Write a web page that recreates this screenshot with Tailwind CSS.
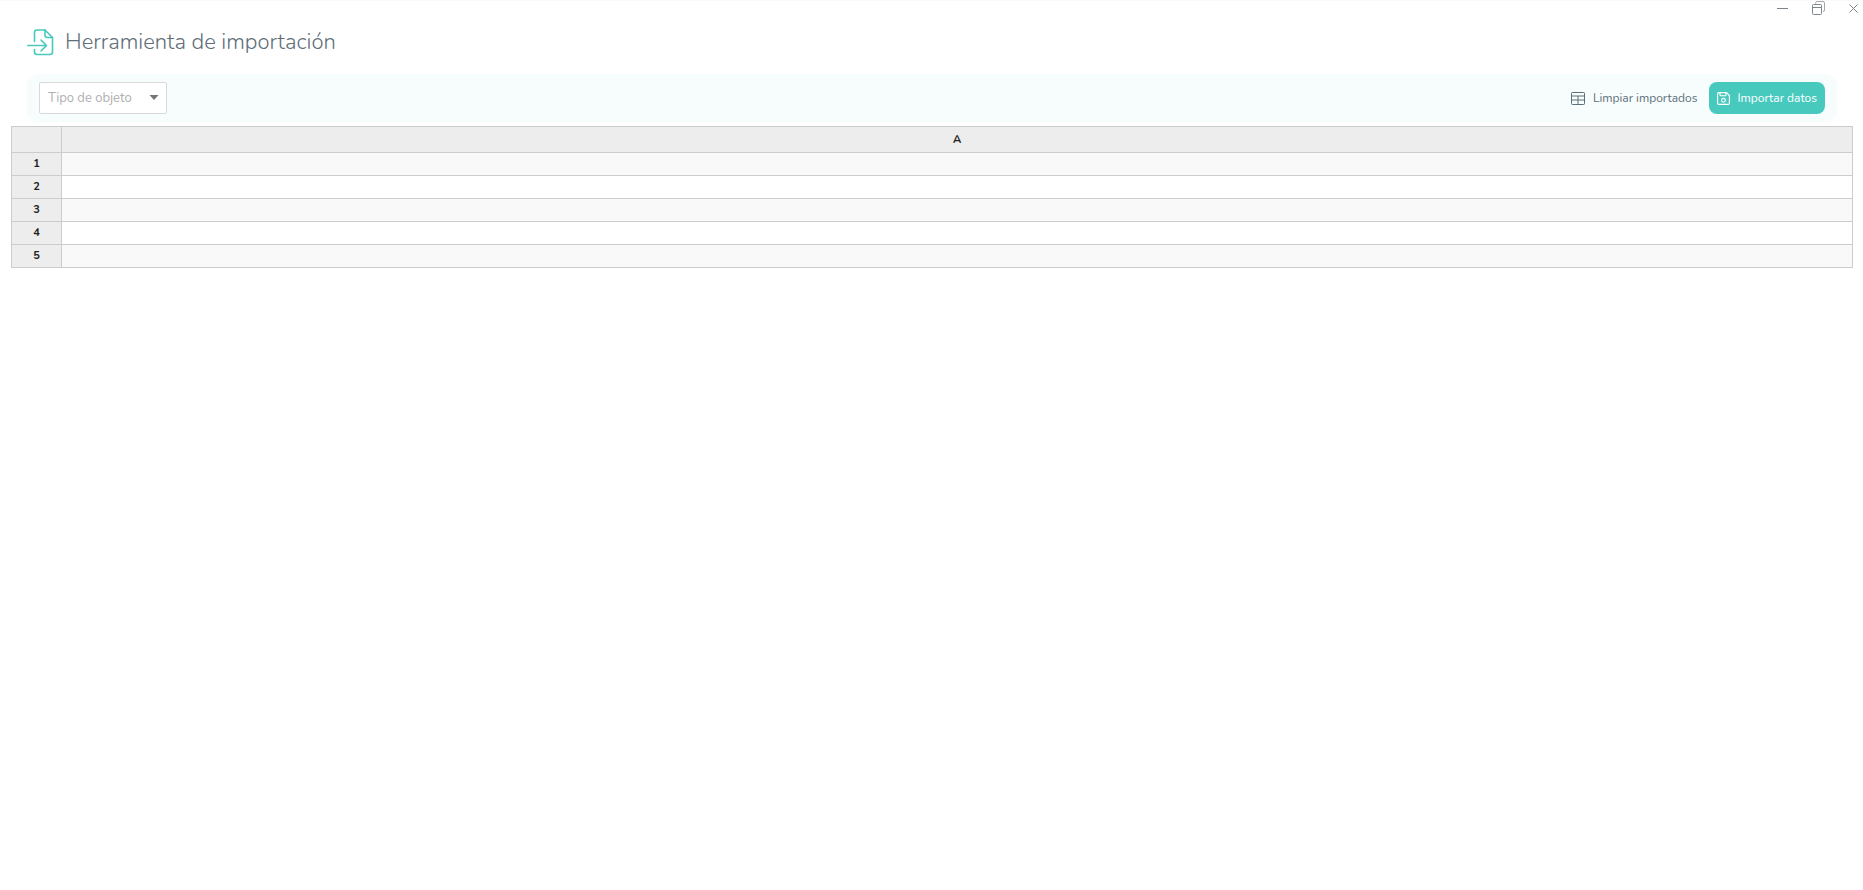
<!DOCTYPE html>
<html lang="es">
<head>
  <meta charset="UTF-8" />
  <meta name="viewport" content="width=device-width, initial-scale=1.0" />
  <title>Herramienta de importación</title>
  <script src="https://cdn.jsdelivr.net/npm/@tailwindcss/browser@4"></script>
</head>
<body class="min-h-screen bg-white font-['Nunito','Lato',sans-serif] text-[#5f6f79]">
  <!-- Window controls -->
  <div class="flex h-[15px] items-center justify-end gap-6 border-t border-[#fafafa] pr-[5px] text-[#7d858c]">
    <button type="button" aria-label="Minimizar">
      <svg class="block" width="11" height="14" viewBox="0 0 11 14" fill="none" stroke="currentColor"><path d="M0 7.5h11" /></svg>
    </button>
    <button type="button" aria-label="Restaurar">
      <svg class="block" width="13" height="14" viewBox="0 0 13 14" fill="none" stroke="currentColor">
        <rect x="0.5" y="3.5" width="9" height="10" rx="1" />
        <path d="M0.5 6.5h9" />
        <path d="M3.5 2.5q0-2 1.500-2h6q1.500 0 1.500 1.500v7q0 1.500-1.500 1.500" stroke-opacity="0.7" />
      </svg>
    </button>
    <button type="button" aria-label="Cerrar">
      <svg class="block" width="9" height="14" viewBox="0 0 9 14" fill="none" stroke="currentColor"><path d="M0.5 3.5l8 8M8.5 3.5l-8 8" /></svg>
    </button>
  </div>

  <header class="flex h-[59px] items-center gap-[11px] px-[26px] pb-1">
    <svg width="28" height="27" viewBox="0 0 28 27" fill="none" stroke="#48c9be" stroke-width="1.6" stroke-linecap="round" stroke-linejoin="round" class="block shrink-0">
      <path d="M8.500 12.500V3.500q0-2.500 2.500-2.500h8l7.500 7.500v14.500q0 2.500-2.500 2.500h-13q-2.500 0-2.500-2.500v-2.500" />
      <path d="M19 1v5q0 2.500 2.500 2.500h5" />
      <path d="M1.800 16.500h18.500M15 11l5.500 5.500-5.500 5.500" />
    </svg>
    <h1 class="pb-0.5 text-[22px] font-light leading-8">Herramienta de importación</h1>
  </header>

  <!-- Toolbar -->
  <div class="mr-[26px] ml-[27px] flex h-12 items-center justify-between rounded-xl bg-[#f7fdfd] px-3">
    <div class="relative">
      <select aria-label="Tipo de objeto" class="block h-8 w-32 appearance-none rounded-xs border border-[#d9d9d9] bg-white pt-0.5 pl-2 text-[13px] text-[#b0b0b0]">
        <option>Tipo de objeto</option>
      </select>
      <svg class="pointer-events-none absolute top-[13px] right-2" width="10" height="5" viewBox="0 0 10 5" fill="#757575"><path d="M0.5 0h9L5 5z" /></svg>
    </div>
    <div class="flex items-center gap-3 text-[12px]">
      <button type="button" class="flex h-8 items-center gap-2">
        <svg width="14" height="13" viewBox="0 0 14 13" fill="none" stroke="#5f6f79">
          <rect x="0.5" y="0.5" width="13" height="12" rx="0.8" />
          <path d="M0.5 4h13M0.5 8h13M7 4v8.500" />
        </svg>
        Limpiar importados
      </button>
      <button type="button" class="flex h-8 items-center gap-[7px] rounded-lg bg-[#48c9be] px-2 text-white">
        <svg width="13" height="13" viewBox="0 0 13 13" fill="none" stroke="currentColor" stroke-width="1.1">
          <path d="M0.600 2q0-1.400 1.400-1.400h7.500l2.900 2.900v7.500q0 1.400-1.400 1.400h-9q-1.400 0-1.400-1.400z" />
          <path d="M3 0.600v2.400q0 0.800 0.800 0.800h4.400q0.800 0 0.800-0.800v-2.400" />
          <circle cx="6.500" cy="8.300" r="1.900" />
        </svg>
        Importar datos
      </button>
    </div>
  </div>

  <!-- Sheet -->
  <div class="mt-1 mr-[10px] ml-[11px]">
    <table class="w-full table-fixed border-collapse text-[11px] leading-4 text-[#222] [&_td]:border [&_td]:border-[#ccc] [&_th]:border [&_th]:border-[#ccc] [&_th]:bg-[#ededed] [&_th]:font-bold">
      <colgroup>
        <col class="w-[50px]" />
        <col />
      </colgroup>
      <thead>
        <tr class="h-[26px]"><td class="bg-[#ededed]"></td><th scope="col">A</th></tr>
      </thead>
      <tbody>
        <tr class="h-[23px] odd:bg-[#f9f9f9]"><th scope="row">1</th><td></td></tr>
        <tr class="h-[23px] odd:bg-[#f9f9f9]"><th scope="row">2</th><td></td></tr>
        <tr class="h-[23px] odd:bg-[#f9f9f9]"><th scope="row">3</th><td></td></tr>
        <tr class="h-[23px] odd:bg-[#f9f9f9]"><th scope="row">4</th><td></td></tr>
        <tr class="h-[23px] odd:bg-[#f9f9f9]"><th scope="row">5</th><td></td></tr>
      </tbody>
    </table>
  </div>
</body>
</html>
